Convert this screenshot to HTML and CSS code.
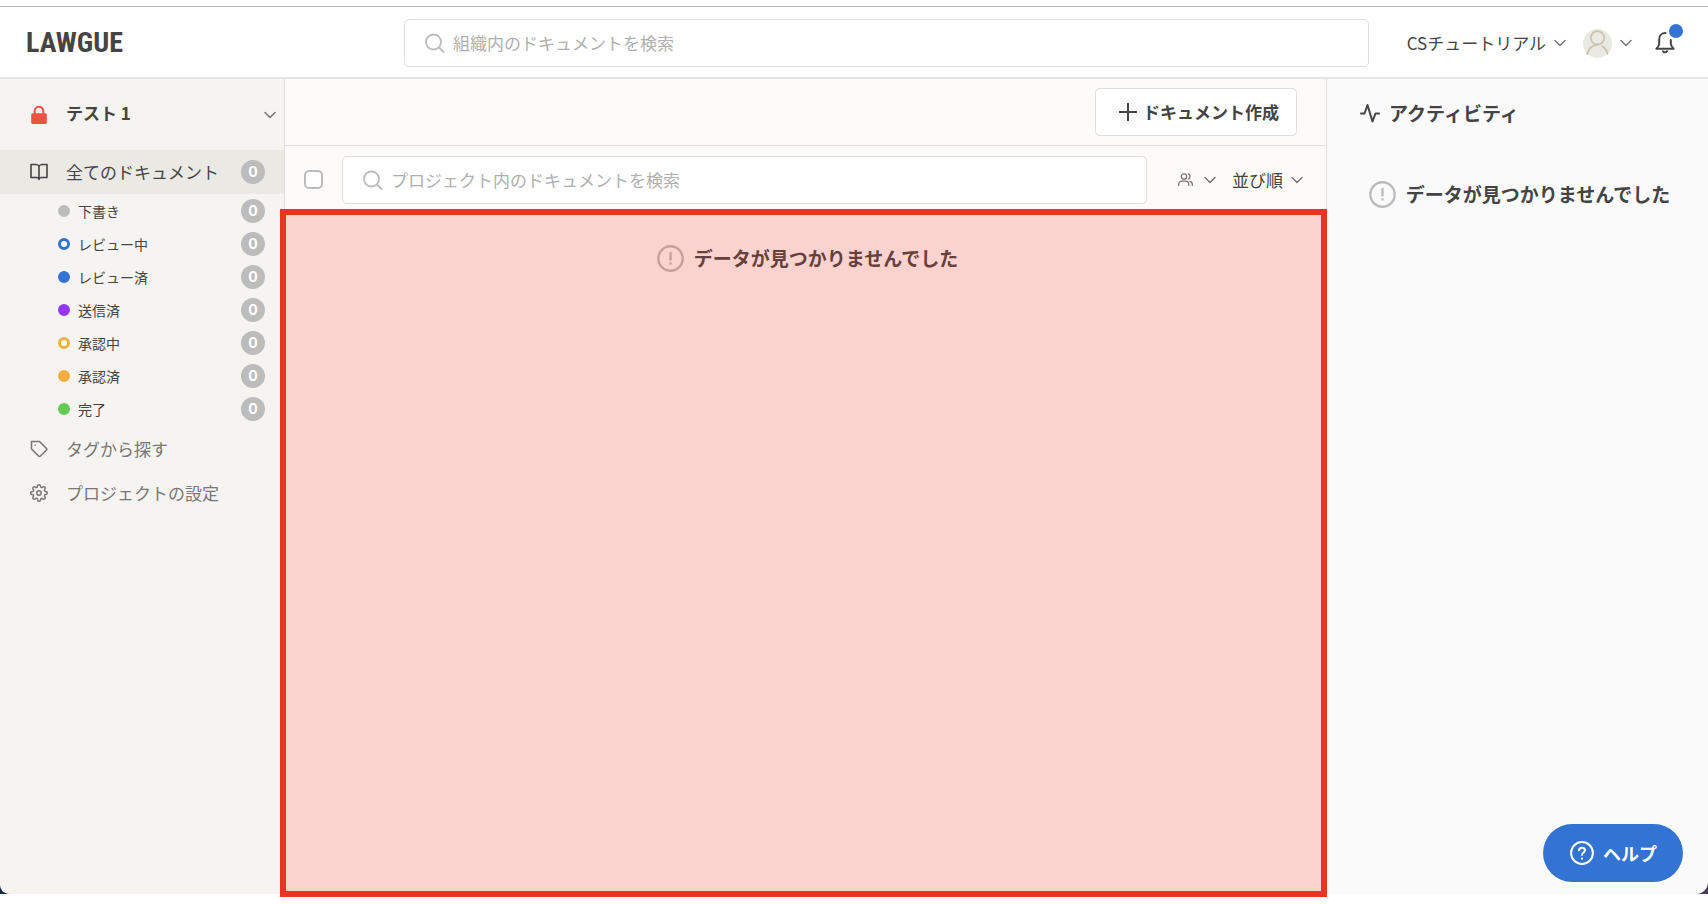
FILE: index.html
```html
<!DOCTYPE html>
<html lang="ja">
<head>
    <meta charset="UTF-8">
    <meta name="viewport" content="width=device-width, initial-scale=1.0">
    <title>LAWGUE</title>
    <link rel="stylesheet" href="styles.css">
</head>
<body>
    <!-- Shared icons -->
    <svg class="sprite" aria-hidden="true">
        <symbol id="chevron" viewBox="0 0 12 12"><path d="M1 3.5l5 5 5-5"/></symbol>
        <symbol id="search" viewBox="0 0 20 20"><circle cx="8.500" cy="9" r="7.500"/><path d="M14 14.500l4.500 4.500"/></symbol>
        <symbol id="alert" viewBox="0 0 27 27"><circle cx="13.5" cy="13.5" r="12.2"/><path d="M13.5 8v6.5"/><path d="M13.5 18.3v.2"/></symbol>
    </svg>

    <div class="app">
        <header class="header">
            <a href="#" class="logo">LAWGUE</a>
            <label class="search header-search">
                <svg class="icon"><use href="#search"/></svg>
                <input type="text" placeholder="組織内のドキュメントを検索" aria-label="組織内のドキュメントを検索">
            </label>
            <div class="header-menu">
                <button class="org-btn" type="button">CSチュートリアル<svg class="chevron"><use href="#chevron"/></svg></button>
                <button class="user-btn" type="button" aria-label="アカウント">
                    <svg class="avatar" viewBox="0 0 29 29">
                        <circle class="avatar-bg" cx="14.5" cy="14.5" r="14.5"/>
                        <circle cx="14.5" cy="8.8" r="6.7"/>
                        <path d="M4.3 25c1.4-5.5 5.2-8.8 9.8-9.2M19.3 17.4c2.600 1.500 4.500 4.200 5.300 7.500"/>
                    </svg>
                    <svg class="chevron"><use href="#chevron"/></svg>
                </button>
                <button class="bell-btn" type="button" aria-label="お知らせ">
                    <svg class="bell" viewBox="0 0 20 22">
                        <path d="M10.500 1.100C6.500 1.100 4.200 3.800 4.200 7v4.500c0 2.500-1.300 3.800-2.800 5.200h17.200c-1.500-1.400-2.800-2.700-2.800-5.200V8"/>
                        <path d="M8 19.300c.9 1.400 3.100 1.400 4 0"/>
                    </svg>
                    <span class="bell-dot"></span>
                </button>
            </div>
        </header>

        <div class="content">
            <nav class="sidebar">
                <button class="project" type="button">
                    <svg class="icon lock" viewBox="0 0 18 18">
                        <rect x="1.200" y="7.200" width="15.600" height="10.800" rx="1.500"/>
                        <path d="M4.700 8V5a4.300 4.300 0 0 1 8.600 0v3"/>
                    </svg>
                    <span>テスト 1</span>
                    <svg class="chevron"><use href="#chevron"/></svg>
                </button>

                <a href="#" class="nav-item active">
                    <svg class="icon" viewBox="0 0 18 18"><path d="M9 3.500v13M9 3.500C8.500 2.200 7.500 1.500 6 1.500H1v13h5.500c1.500 0 2.500.7 2.500 2 0-1.300 1-2 2.500-2H17v-13h-5c-1.500 0-2.500.7-3 2z"/></svg>
                    <span>全てのドキュメント</span>
                    <span class="badge">0</span>
                </a>

                <ul class="status-list">
                    <li><a href="#"><i class="dot gray"></i>下書き<span class="badge">0</span></a></li>
                    <li><a href="#"><i class="dot blue ring"></i>レビュー中<span class="badge">0</span></a></li>
                    <li><a href="#"><i class="dot blue"></i>レビュー済<span class="badge">0</span></a></li>
                    <li><a href="#"><i class="dot purple"></i>送信済<span class="badge">0</span></a></li>
                    <li><a href="#"><i class="dot orange ring"></i>承認中<span class="badge">0</span></a></li>
                    <li><a href="#"><i class="dot orange"></i>承認済<span class="badge">0</span></a></li>
                    <li><a href="#"><i class="dot green"></i>完了<span class="badge">0</span></a></li>
                </ul>

                <a href="#" class="nav-item">
                    <svg class="icon" viewBox="0 0 18 18"><path d="M1.500 1.500h8l7 7c.5.5.5 1 0 1.500l-6 6c-.6.6-1.400.6-2 0l-7-7z"/><path d="M5.200 5.200v.1"/></svg>
                    <span>タグから探す</span>
                </a>
                <a href="#" class="nav-item">
                    <svg class="icon gear" viewBox="0 0 24 24"><circle cx="12" cy="12" r="3"/><path d="M19.400 15a1.650 1.650 0 0 0 .33 1.820l.06.06a2 2 0 1 1-2.830 2.830l-.06-.06a1.650 1.650 0 0 0-2.800 1.170V21a2 2 0 0 1-4 0v-.09a1.650 1.650 0 0 0-2.900-1.260l-.06.06a2 2 0 1 1-2.830-2.830l.06-.06a1.650 1.650 0 0 0-1.170-2.800H3a2 2 0 0 1 0-4h.09a1.650 1.650 0 0 0 1.260-2.900l-.06-.06a2 2 0 1 1 2.830-2.830l.06.06a1.650 1.650 0 0 0 2.820-1.200V3a2 2 0 0 1 4 0v.09a1.650 1.650 0 0 0 2.820 1.170l.06-.06a2 2 0 1 1 2.830 2.830l-.06.06a1.650 1.650 0 0 0 1.200 2.820H21a2 2 0 0 1 0 4h-.09a1.650 1.650 0 0 0-1.510 1.090z"/></svg>
                    <span>プロジェクトの設定</span>
                </a>
            </nav>

            <main class="main">
                <div class="toolbar">
                    <button class="create-btn" type="button">
                        <svg viewBox="0 0 18 18"><path d="M9 0v18M0 9h18"/></svg>ドキュメント作成
                    </button>
                </div>
                <div class="filters">
                    <input type="checkbox" class="check-all" aria-label="全て選択">
                    <label class="search">
                        <svg class="icon"><use href="#search"/></svg>
                        <input type="text" placeholder="プロジェクト内のドキュメントを検索" aria-label="プロジェクト内のドキュメントを検索">
                    </label>
                    <button class="member-btn" type="button" aria-label="メンバー">
                        <svg class="users" viewBox="0 0 15 13">
                            <circle cx="6" cy="3.500" r="2.700"/>
                            <path d="M.7 12.500v-1c0-2 1.500-3.300 3.300-3.300h3.500c1.800 0 3.300 1.300 3.300 3.300v1M10.300.900a2.800 2.800 0 0 1 0 5.200M12 8.300c1.400.4 2.300 1.700 2.300 3.200v1"/>
                        </svg>
                        <svg class="chevron"><use href="#chevron"/></svg>
                    </button>
                    <button class="sort-btn" type="button">並び順<svg class="chevron"><use href="#chevron"/></svg></button>
                </div>
                <section class="documents">
                    <p class="empty"><svg><use href="#alert"/></svg>データが見つかりませんでした</p>
                </section>
            </main>

            <aside class="activity">
                <h2>
                    <svg viewBox="0 0 20 20"><path d="M1 10.500h3.500L7.500 2l5 16.500L15.500 10.500h3.500"/></svg>アクティビティ
                </h2>
                <p class="empty"><svg><use href="#alert"/></svg>データが見つかりませんでした</p>
            </aside>
        </div>
    </div>

    <button class="help-btn" type="button">
        <svg viewBox="0 0 24 24"><circle cx="12" cy="12" r="10.900"/><path d="M9 9.200c.3-1.700 1.500-2.500 3-2.500 1.800 0 3 1.100 3 2.600 0 2.300-3 2.300-3 4.600M12 17.600v.1"/></svg>ヘルプ
    </button>
</body>
</html>
```
FILE: styles.css
```css
:root {
    --text-color: #444444;
    --muted-color: #777777;
    --gray: #bcbcbc;
    --border-color: #dedede;
    --line-color: #e4e4e4;
    --blue: #3273d3;
    --red: #ea3323;
}

* {
    box-sizing: border-box;
}

body {
    min-height: 100vh;
    margin: 0;
    background-color: #ffffff;
    color: var(--text-color);
    font-family: "Noto Sans CJK JP", sans-serif;
    font-size: 17px;
    line-height: 24px;
}

a {
    color: inherit;
    text-decoration: none;
}

button {
    display: flex;
    align-items: center;
    margin: 0;
    padding: 0;
    border: none;
    background: none;
    color: inherit;
    font: inherit;
    cursor: pointer;
}

svg {
    flex: none;
    fill: none;
    stroke: currentColor;
    stroke-width: 2;
    stroke-linecap: round;
    stroke-linejoin: round;
}

.sprite {
    display: none;
}

.chevron {
    width: 12px;
    height: 12px;
    color: var(--muted-color);
    stroke-width: 1.5;
}

.app {
    display: flex;
    flex-direction: column;
    height: calc(100vh - 10px);
    padding-top: 6px;
}

/* Header */
.header {
    display: flex;
    align-items: center;
    height: 73px;
    padding-top: 2px;
    border-top: 1px solid #c4b1b3;
    border-bottom: 2px solid var(--line-color);
}

.logo {
    width: 404px;
    padding-left: 26px;
    font-family: "Roboto Condensed", "Liberation Sans Narrow", "DejaVu Sans Condensed", sans-serif;
    font-size: 28px;
    font-weight: bold;
}

.search {
    display: flex;
    flex: 1;
    align-items: center;
    height: 48px;
    padding-left: 20px;
    gap: 8px;
    border: 1px solid var(--border-color);
    border-radius: 5px;
    background-color: #ffffff;
}

.search .icon {
    width: 20px;
    height: 20px;
    color: var(--gray);
    stroke-width: 1.8;
}

.search input {
    flex: 1;
    min-width: 0;
    padding: 0;
    border: none;
    outline: none;
    background: none;
    color: inherit;
    font: inherit;
}

.search input::placeholder {
    color: #b0b0b0;
    opacity: 1;
}

.header-menu {
    display: flex;
    align-items: center;
    justify-content: flex-end;
    width: 339px;
    padding-right: 33px;
}

.org-btn {
    gap: 8px;
}

.user-btn {
    gap: 8px;
    margin-left: 17px;
}

.avatar {
    width: 29px;
    height: 29px;
    color: #cdc4b0;
    stroke-width: 1.8;
}

.avatar-bg {
    fill: #ebe9e4;
    stroke: none;
}

.bell-btn {
    position: relative;
    margin-left: 23px;
}

.bell {
    width: 20px;
    height: 22px;
}

.bell-dot {
    position: absolute;
    top: -8px;
    right: -8px;
    width: 14px;
    height: 14px;
    border-radius: 50%;
    background-color: var(--blue);
}

/* The window corners let the desktop show through */
.content {
    display: flex;
    flex: 1;
    min-height: 0;
    background: linear-gradient(90deg, #17294a, #4d3a5c);
}

/* Sidebar */
.sidebar {
    width: 285px;
    border-right: 1px solid var(--border-color);
    border-bottom-left-radius: 9px;
    background-color: #f5f4f0;
}

.project {
    width: 100%;
    height: 71px;
    padding: 0 8px 0 30px;
    font-weight: bold;
}

.project span {
    flex: 1;
    margin-left: 18px;
    padding-bottom: 4px;
    text-align: left;
}

.icon {
    width: 18px;
    height: 18px;
    stroke-width: 1.6;
}

.lock {
    color: #ec5242;
    stroke-width: 2;
}

.lock rect {
    fill: currentColor;
    stroke: none;
}

.nav-item {
    display: flex;
    align-items: center;
    height: 44px;
    padding: 0 19px 0 30px;
    gap: 18px;
    color: var(--muted-color);
}

.nav-item.active {
    background-color: #ebe9e4;
    color: var(--text-color);
}

.gear {
    stroke-width: 2;
}

.badge {
    width: 24px;
    height: 24px;
    margin-left: auto;
    border-radius: 50%;
    background-color: var(--gray);
    color: #ffffff;
    font-family: Inter, sans-serif;
    font-size: 14px;
    font-weight: bold;
    text-align: center;
}

.status-list {
    margin: 0;
    padding-bottom: 2px;
    padding-left: 0;
    list-style: none;
    font-size: 14px;
}

.status-list a {
    display: flex;
    align-items: center;
    height: 33px;
    padding: 0 19px 0 58px;
}

.dot {
    width: 12px;
    height: 12px;
    margin-right: 8px;
    border: 3px solid currentColor;
    border-radius: 50%;
    background-color: currentColor;
}

.dot.ring {
    background-color: #ffffff;
}

.gray { color: #bcbcbc; }
.blue { color: #3273d3; }
.purple { color: #9437f5; }
.orange { color: #f2ae3d; }
.green { color: #65ca55; }

/* Documents */
.main {
    display: flex;
    flex: 1;
    flex-direction: column;
    background-color: #fcfbf9;
}

.toolbar {
    display: flex;
    align-items: center;
    justify-content: flex-end;
    height: 67px;
    padding-right: 29px;
    border-bottom: 1px solid var(--border-color);
}

.create-btn {
    height: 48px;
    padding: 0 17px 0 23px;
    gap: 6px;
    border: 1px solid var(--border-color);
    border-radius: 5px;
    background-color: #ffffff;
    font-weight: bold;
}

.create-btn svg {
    width: 18px;
    height: 18px;
}

.filters {
    display: flex;
    align-items: center;
    height: 63px;
    padding: 4px 23px 0 19px;
}

.check-all {
    width: 19px;
    height: 19px;
    margin: 0 19px 0 0;
    border: 2px solid var(--gray);
    border-radius: 5px;
    background-color: #ffffff;
    appearance: none;
}

.member-btn {
    gap: 11px;
    margin-left: 31px;
}

.users {
    width: 15px;
    height: 13px;
    color: var(--muted-color);
    stroke-width: 1.3;
}

.sort-btn {
    gap: 8px;
    margin-left: 16px;
}

.documents {
    position: relative;
    flex: 1;
    padding-top: 35px;
}

/* Highlighted area, runs over the edges of the list */
.documents::after {
    content: '';
    position: absolute;
    top: 0;
    right: -1px;
    bottom: -3px;
    left: -5px;
    border: 6px solid var(--red);
    background-color: rgba(245, 50, 35, 0.2);
    background-clip: padding-box;
    pointer-events: none;
}

.empty {
    display: flex;
    align-items: center;
    justify-content: center;
    margin: 0;
    padding-left: 4px;
    gap: 10px;
    font-size: 19px;
    font-weight: bold;
    line-height: 28px;
}

.empty svg {
    width: 27px;
    height: 27px;
    color: var(--gray);
    stroke-width: 2.4;
}

/* Activity */
.activity {
    width: 382px;
    padding-top: 20px;
    border-left: 1px solid var(--border-color);
    border-bottom-right-radius: 12px;
    background-color: #fafafa;
}

.activity h2 {
    display: flex;
    align-items: center;
    margin: 0 0 53px;
    padding-left: 33px;
    gap: 9px;
    font-size: 19px;
    line-height: 28px;
}

.activity h2 svg {
    width: 20px;
    height: 20px;
}

.help-btn {
    position: fixed;
    right: 25px;
    bottom: 22px;
    height: 58px;
    padding: 0 26px 0 27px;
    gap: 9px;
    border-radius: 29px;
    background-color: var(--blue);
    color: #ffffff;
    font-size: 18px;
    font-weight: bold;
}

.help-btn svg {
    width: 24px;
    height: 24px;
}
```
